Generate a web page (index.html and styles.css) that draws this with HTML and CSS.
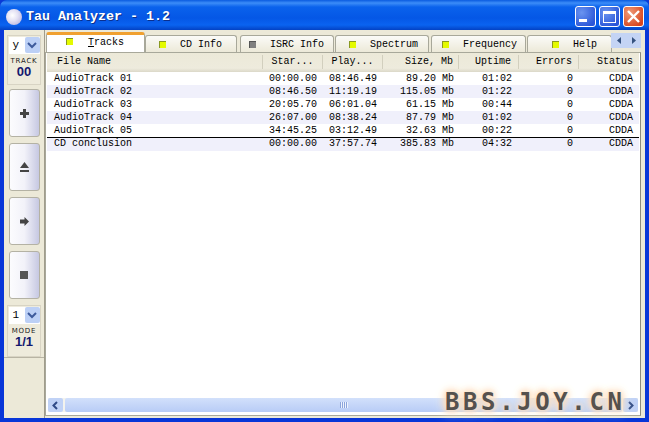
FILE: index.html
```html
<!DOCTYPE html>
<html>
<head>
<meta charset="utf-8">
<title>Tau Analyzer - 1.2</title>
<link rel="stylesheet" href="styles.css">
</head>
<body>
<div class="window">
  <header class="titlebar">
    <span class="appicon"></span>
    <span class="title">Tau Analyzer - 1.2</span>
    <div class="controls">
      <span class="ctl"><svg width="21" height="21" viewBox="0 0 21 21"><rect x="4" y="13" width="8" height="3" fill="#fff"/></svg></span>
      <span class="ctl"><svg width="21" height="21" viewBox="0 0 21 21"><rect x="4.500" y="5.500" width="12" height="11" fill="none" stroke="#fff"/><rect x="4" y="5" width="13" height="3" fill="#fff"/></svg></span>
      <span class="ctl close"><svg width="21" height="21" viewBox="0 0 21 21"><path d="M5 5L16 16M16 5L5 16" stroke="#fff" stroke-width="2.400"/></svg></span>
    </div>
  </header>
  <div class="client">
    <aside class="sidebar">
      <div class="group">
        <div class="combo"><span class="val">y</span><span class="drop"><svg width="10" height="7" viewBox="0 0 10 7"><path d="M1 1L5 5L9 1" fill="none" stroke="#3d5a9c" stroke-width="2"/></svg></span></div>
        <div class="lbl">TRACK</div>
        <div class="num">00</div>
      </div>
      <div class="btn"><svg width="11" height="11" viewBox="0 0 11 11"><path d="M4 1H7V4H10V7H7V10H4V7H1V4H4Z" fill="#444"/></svg></div>
      <div class="btn"><svg width="11" height="12" viewBox="0 0 11 12"><path d="M5.500 1L10 7H1Z" fill="#444"/><rect x="1" y="9" width="9" height="2" fill="#444"/></svg></div>
      <div class="btn"><svg width="11" height="11" viewBox="0 0 11 11"><path d="M1 3.500H5.500V1L10 5.500L5.500 10V7.500H1Z" fill="#444"/></svg></div>
      <div class="btn"><svg width="9" height="9" viewBox="0 0 9 9"><rect width="8" height="8" fill="#555"/></svg></div>
      <div class="group lower">
        <div class="combo"><span class="val">1</span><span class="drop"><svg width="10" height="7" viewBox="0 0 10 7"><path d="M1 1L5 5L9 1" fill="none" stroke="#3d5a9c" stroke-width="2"/></svg></span></div>
        <div class="lbl">MODE</div>
        <div class="num">1/1</div>
      </div>
      <div class="rule"></div>
    </aside>
    <main class="main">
      <nav class="tabs">
        <div class="tab active t1"><i class="led"></i><span><u>T</u>racks</span></div>
        <div class="tab t2"><i class="led"></i><span>CD Info</span></div>
        <div class="tab t3"><i class="led off"></i><span>ISRC Info</span></div>
        <div class="tab t4"><i class="led"></i><span>Spectrum</span></div>
        <div class="tab t5"><i class="led"></i><span>Frequency</span></div>
        <div class="tab t6"><i class="led"></i><span>Help</span></div>
        <div class="spin">
          <svg width="8" height="9" viewBox="0 0 8 9"><path d="M6 1L2 4.500L6 8Z" fill="#35527f"/></svg>
          <svg width="8" height="9" viewBox="0 0 8 9"><path d="M2 1L6 4.500L2 8Z" fill="#35527f"/></svg>
        </div>
      </nav>
      <section class="panel">
        <div class="row head">
          <span class="c name">File Name</span><span class="c mid">Star...</span><span class="c mid">Play...</span><span class="c size">Size, Mb</span><span class="c up">Uptime</span><span class="c err">Errors</span><span class="c stat">Status</span>
        </div>
        <div class="row"><span class="c name">AudioTrack 01</span><span class="c time">00:00.00</span><span class="c time">08:46.49</span><span class="c size">89.20 Mb</span><span class="c up">01:02</span><span class="c err">0</span><span class="c stat">CDDA</span></div>
        <div class="row alt"><span class="c name">AudioTrack 02</span><span class="c time">08:46.50</span><span class="c time">11:19.19</span><span class="c size">115.05 Mb</span><span class="c up">01:22</span><span class="c err">0</span><span class="c stat">CDDA</span></div>
        <div class="row"><span class="c name">AudioTrack 03</span><span class="c time">20:05.70</span><span class="c time">06:01.04</span><span class="c size">61.15 Mb</span><span class="c up">00:44</span><span class="c err">0</span><span class="c stat">CDDA</span></div>
        <div class="row alt"><span class="c name">AudioTrack 04</span><span class="c time">26:07.00</span><span class="c time">08:38.24</span><span class="c size">87.79 Mb</span><span class="c up">01:02</span><span class="c err">0</span><span class="c stat">CDDA</span></div>
        <div class="row"><span class="c name">AudioTrack 05</span><span class="c time">34:45.25</span><span class="c time">03:12.49</span><span class="c size">32.63 Mb</span><span class="c up">00:22</span><span class="c err">0</span><span class="c stat">CDDA</span></div>
        <div class="row alt total"><span class="c name">CD conclusion</span><span class="c time">00:00.00</span><span class="c time">37:57.74</span><span class="c size">385.83 Mb</span><span class="c up">04:32</span><span class="c err">0</span><span class="c stat">CDDA</span></div>
        <div class="spacer"></div>
        <div class="hscroll">
          <span class="sb"><svg width="9" height="9" viewBox="0 0 9 9"><path d="M6 1L2.500 4.500L6 8" fill="none" stroke="#2f4a86" stroke-width="2"/></svg></span>
          <span class="thumb"><i></i></span>
          <span class="sb"><svg width="9" height="9" viewBox="0 0 9 9"><path d="M3 1L6.500 4.500L3 8" fill="none" stroke="#2f4a86" stroke-width="2"/></svg></span>
        </div>
      </section>
    </main>
  </div>
  <div class="watermark">BBS.JOY.CN</div>
</div>
</body>
</html>
```
FILE: styles.css
```css
* { box-sizing: border-box; }
html, body { margin: 0; padding: 0; overflow: hidden; }
body { width: 649px; height: 422px; background: #0a3ad6; }
.window {
  position: relative;
  width: 649px;
  height: 422px;
  display: flex;
  flex-direction: column;
  padding: 0 4px 4px;
  background: #0836d8;
  font-family: "Liberation Mono", monospace;
  font-size: 10px;
  color: #000;
  border-radius: 7px 7px 0 0;
  overflow: hidden;
}
.titlebar {
  height: 30px;
  margin: 0 -4px;
  padding: 3px 5px 0 6px;
  display: flex;
  align-items: center;
  background: linear-gradient(#0a5be0 0, #3c8df8 3px, #0a62ec 7px, #0557e6 18px, #0a63f0 25px, #0342c4 30px);
}
.appicon {
  width: 16px;
  height: 16px;
  border-radius: 50%;
  background: radial-gradient(circle at 40% 40%, #fff 0, #e4e2f4 40%, #a9a6d8 100%);
}
.title {
  margin-left: 4px;
  font-size: 13.330px;
  font-weight: bold;
  color: #fff;
  text-shadow: 1px 1px 0 #0a2f8e;
}
.controls { margin-left: auto; display: flex; gap: 3px; }
.ctl {
  width: 21px;
  height: 21px;
  border: 1px solid #fff;
  border-radius: 3px;
  background: radial-gradient(circle at 30% 30%, #6a94f0, #2a56d8 80%);
  display: flex;
  align-items: center;
  justify-content: center;
}
.ctl svg { flex: none; }
.close { background: radial-gradient(circle at 30% 30%, #ef9a78, #d8461f 80%); }
.client { flex: 1; display: flex; background: #ece9d8; min-height: 0; }
.sidebar {
  width: 41px;
  padding: 5px 3px 0 3px;
  display: flex;
  flex-direction: column;
  align-items: center;
  gap: 6px;
  border-right: 1px solid #a09c8c;
  background: #ece9d8;
}
.group {
  width: 34px;
  height: 50px;
  padding: 1px;
  margin-bottom: -2px;
  display: flex;
  flex-direction: column;
  align-items: center;
  background: #eeebdc;
  border: 1px solid #d8d4c4;
}
.lower { height: 52px; margin-bottom: 0; }
.rule {
  align-self: stretch;
  height: 1px;
  margin: -6px -3px 0;
  flex: none;
  background: #b8b4a4;
}
.combo { width: 31px; height: 17px; display: flex; background: #fff; flex: none; }
.val { flex: 1; padding-left: 4px; font-size: 11px; line-height: 17px; }
.drop {
  width: 15px;
  height: 16px;
  border-radius: 2px;
  background: #bcd0f6;
  display: flex;
  align-items: center;
  justify-content: center;
}
.lbl { margin-top: 3px; font-family: "DejaVu Sans", sans-serif; font-size: 7px; line-height: 8px; letter-spacing: .8px; color: #222; white-space: nowrap; }
.num { font-family: "Liberation Sans", sans-serif; font-size: 13px; line-height: 14px; font-weight: bold; color: #14186e; }
.btn {
  width: 31px;
  height: 48px;
  flex: none;
  display: flex;
  align-items: center;
  justify-content: center;
  background: linear-gradient(90deg, #fcfcfe 0, #f2f2f9 50%, #c6c8e2 100%);
  border: 1px solid #b4b2a4;
  border-radius: 3px;
}
.main { flex: 1; display: flex; flex-direction: column; min-width: 0; padding: 1px 4px 2px 0; }
.tabs { height: 21px; display: flex; align-items: flex-end; position: relative; flex: none; }
.tab {
  height: 17px;
  display: flex;
  align-items: center;
  background: linear-gradient(#fbfbf8, #ece9d8);
  border: 1px solid #a8a89a;
  border-bottom: 0;
  border-radius: 3px 3px 0 0;
}
.tab span { margin-left: 14px; }
.active {
  height: 20px;
  background: #fff;
  border-top: 3px solid #f0a030;
  z-index: 1;
}
.t1 { width: 99px; margin-left: 1px; }
.t2 { width: 92px; }
.t3 { width: 94px; margin-left: 3px; }
.t4 { width: 94px; margin-left: 1px; }
.t5 { width: 95px; margin-left: 2px; }
.t6 { width: 85px; margin-left: 1px; }
.t1 .led { margin-left: 19px; margin-top: -4px; }
.t1 span { margin-left: 15px; margin-top: -2px; }
.t2 .led { margin-left: 13px; }
.t3 .led { margin-left: 8px; }
.t4 .led { margin-left: 13px; }
.t5 .led { margin-left: 10px; }
.t6 .led { margin-left: 24px; }
.led { display: block; width: 7px; height: 7px; flex: none; background: #e4fa00; border: 1px solid #8a9a20; border-width: 1px 0 0 1px; }
.led.off { background: #808080; border-color: #555; }
.spin {
  position: absolute;
  top: 2px;
  right: 0;
  width: 30px;
  height: 15px;
  display: flex;
  align-items: center;
  justify-content: space-around;
  background: #c4d4f4;
}
.panel {
  flex: 1;
  display: flex;
  flex-direction: column;
  min-height: 0;
  background: #fff;
  border: 1px solid #a8a89a;
  border-right-color: #8c8a7c;
  padding: 0 1px 3px 1px;
}
.row { display: flex; height: 13px; line-height: 13px; white-space: pre; flex: none; }
.row.alt { background: #f0f0fb; }
.c { display: block; text-align: right; padding-right: 6px; flex: none; }
.name { width: 216px; text-align: left; padding-left: 7px; }
.time { width: 60px; }
.mid { width: 60px; text-align: center; padding-right: 0; }
.size { width: 76px; padding-right: 5px; }
.up { width: 60px; padding-right: 7px; }
.err { width: 60px; }
.stat { width: 60px; }
.head {
  height: 19px;
  background: linear-gradient(#ece9d8 0, #eeebdd 80%, #dbd8c8 100%);
}
.head .c { border-right: 1px solid #d2cfbe; height: 14px; line-height: 14px; margin-top: 2px; }
.head .name { padding-left: 10px; }
.head .stat { border-right: 0; }
.total { height: 14px; line-height: 11px; border-top: 1px solid #000; }
.spacer { flex: 1; }
.hscroll {
  height: 14px;
  margin: 0 1px;
  display: flex;
  align-items: stretch;
  gap: 1px;
  background: #f3f3ee;
}
.sb {
  width: 15px;
  background: #c0d2f6;
  border-radius: 2px;
  display: flex;
  align-items: center;
  justify-content: center;
}
.thumb {
  flex: 1;
  margin-left: 1px;
  background: linear-gradient(#d2e0fb, #b8ccf6);
  border-radius: 2px;
  display: flex;
  align-items: center;
  justify-content: center;
}
.thumb i { width: 8px; height: 6px; background: repeating-linear-gradient(90deg, #8aa4dc 0 1px, #eef3fd 1px 2px); }
.watermark {
  position: absolute;
  left: 445px;
  top: 389px;
  width: 180px;
  font-family: "DejaVu Sans Mono", monospace;
  font-weight: bold;
  font-size: 24px;
  line-height: 26px;
  letter-spacing: 3.600px;
  color: #55514e;
  white-space: nowrap;
  text-shadow: 0 0 4px #fbe2c8, 0 0 6px #fbdcbc, 0 0 8px #fbdcbc, 0 0 12px #fde8d0, 0 0 16px #fef0e2;
}
```
